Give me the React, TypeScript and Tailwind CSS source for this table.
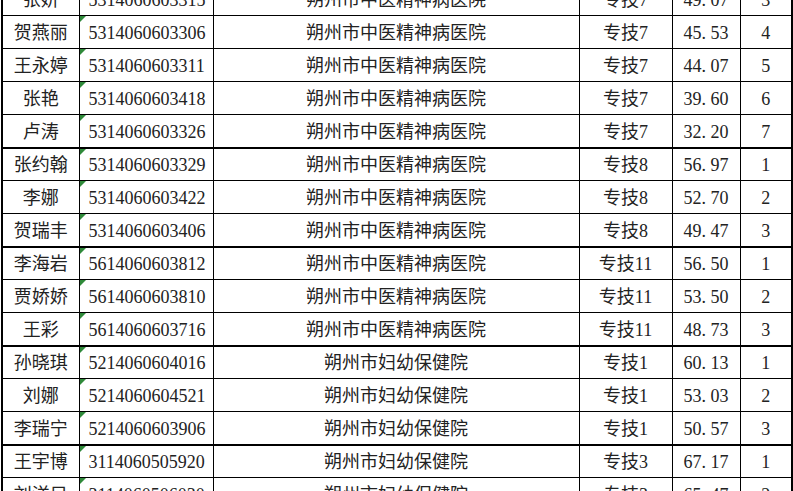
const TCM = "朔州市中医精神病医院";
const MCH = "朔州市妇幼保健院";

type Row = {
  name: string;
  id: string;
  org: string;
  post: string;
  score: string;
  rank: number;
  groupEnd?: boolean;
};

const rows: Row[] = [
  { name: "张妍", id: "5314060603315", org: TCM, post: "专技7", score: "49.07", rank: 3 },
  { name: "贺燕丽", id: "5314060603306", org: TCM, post: "专技7", score: "45.53", rank: 4 },
  { name: "王永婷", id: "5314060603311", org: TCM, post: "专技7", score: "44.07", rank: 5 },
  { name: "张艳", id: "5314060603418", org: TCM, post: "专技7", score: "39.60", rank: 6 },
  { name: "卢涛", id: "5314060603326", org: TCM, post: "专技7", score: "32.20", rank: 7, groupEnd: true },
  { name: "张约翰", id: "5314060603329", org: TCM, post: "专技8", score: "56.97", rank: 1 },
  { name: "李娜", id: "5314060603422", org: TCM, post: "专技8", score: "52.70", rank: 2 },
  { name: "贺瑞丰", id: "5314060603406", org: TCM, post: "专技8", score: "49.47", rank: 3, groupEnd: true },
  { name: "李海岩", id: "5614060603812", org: TCM, post: "专技11", score: "56.50", rank: 1 },
  { name: "贾娇娇", id: "5614060603810", org: TCM, post: "专技11", score: "53.50", rank: 2 },
  { name: "王彩", id: "5614060603716", org: TCM, post: "专技11", score: "48.73", rank: 3, groupEnd: true },
  { name: "孙晓琪", id: "5214060604016", org: MCH, post: "专技1", score: "60.13", rank: 1 },
  { name: "刘娜", id: "5214060604521", org: MCH, post: "专技1", score: "53.03", rank: 2 },
  { name: "李瑞宁", id: "5214060603906", org: MCH, post: "专技1", score: "50.57", rank: 3, groupEnd: true },
  { name: "王宇博", id: "3114060505920", org: MCH, post: "专技3", score: "67.17", rank: 1 },
  { name: "刘洋目", id: "3114060506030", org: MCH, post: "专技3", score: "65.47", rank: 2 },
];

// SimSun-style score: the period takes a full half-width cell
function Score({ value }: { value: string }) {
  const [a, b] = value.split(".");
  return (
    <span>
      {a}
      <span className="inline-block w-[9px] text-left">.</span>
      {b}
    </span>
  );
}

export default function App() {
  const cell = "border border-black h-[33px] p-0 pt-[2px] align-middle";
  return (
    <div className="w-[793px] h-[491px] overflow-hidden bg-white">
      <table
        className="table-fixed border-collapse mt-[-18px] ml-px text-[18px] leading-none text-[#222] font-['Liberation_Serif','Noto_Sans_CJK_SC',serif]"
        style={{ width: 790 }}
      >
        <colgroup>
          <col className="w-[77px]" />
          <col className="w-[134px]" />
          <col className="w-[366px]" />
          <col className="w-[93px]" />
          <col className="w-[68px]" />
          <col className="w-[52px]" />
        </colgroup>
        <tbody>
          {rows.map((r) => {
            const b = r.groupEnd ? "border-b-2" : "";
            return (
              <tr key={r.id}>
                <td className={`${cell} ${b} border-l-2 text-center`}>{r.name}</td>
                <td className={`${cell} ${b} relative pl-[9px] text-left`}>
                  <span className="absolute left-0 top-0 w-0 h-0 border-t-[6px] border-t-[#2f8a3a] border-r-[6px] border-r-transparent" />
                  {r.id}
                </td>
                <td className={`${cell} ${b} text-center`}>{r.org}</td>
                <td className={`${cell} ${b} text-center`}>{r.post}</td>
                <td className={`${cell} ${b} text-center`}>
                  <Score value={r.score} />
                </td>
                <td className={`${cell} ${b} border-r-2 text-center`}>{r.rank}</td>
              </tr>
            );
          })}
        </tbody>
      </table>
    </div>
  );
}
